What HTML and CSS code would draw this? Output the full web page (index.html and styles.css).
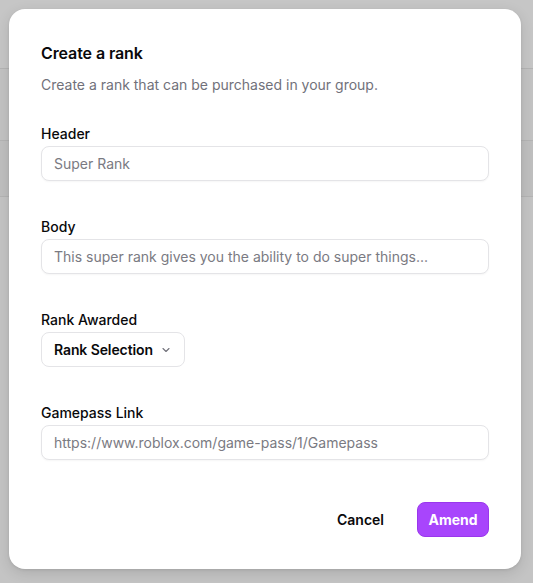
FILE: index.html
```html
<!DOCTYPE html>
<html lang="en">
<head>
<meta charset="utf-8">
<title>Create a rank</title>
<link rel="stylesheet" href="styles.css">
</head>
<body>
<div class="backdrop">
  <div class="bg-row bg-row-1"></div>
  <div class="bg-row bg-row-2"></div>
  <div class="bg-row bg-row-3"></div>
  <div class="bg-row bg-row-4"></div>
</div>
<div class="dialog" role="dialog" aria-labelledby="dlg-title">
  <h2 id="dlg-title" class="dialog-title">Create a rank</h2>
  <p class="dialog-desc">Create a rank that can be purchased in your group.</p>

  <div class="field field-first">
    <label class="field-label">Header</label>
    <input class="text-input" type="text" placeholder="Super Rank">
  </div>

  <div class="field">
    <label class="field-label">Body</label>
    <input class="text-input" type="text" placeholder="This super rank gives you the ability to do super things...">
  </div>

  <div class="field">
    <label class="field-label">Rank Awarded</label>
    <button class="select-btn" type="button">
      <span class="select-text">Rank Selection</span>
      <svg class="chevron" width="12" height="12" viewBox="0 0 24 24" fill="none" stroke="currentColor" stroke-width="2.2" stroke-linecap="round" stroke-linejoin="round"><path d="m6 9 6 6 6-6"/></svg>
    </button>
  </div>

  <div class="field">
    <label class="field-label">Gamepass Link</label>
    <input class="text-input" type="text" placeholder="https://www.roblox.com/game-pass/1/Gamepass">
  </div>

  <div class="dialog-footer">
    <button class="btn btn-ghost" type="button">Cancel</button>
    <button class="btn btn-primary" type="button">Amend</button>
  </div>
</div>
</body>
</html>
```

FILE: styles.css
```css
* { box-sizing: border-box; }

html, body {
  margin: 0;
  padding: 0;
  height: 100%;
}

body {
  background: #c5c5c5;
  font-family: Inter, "Liberation Sans", sans-serif;
  color: #09090b;
  overflow: hidden;
}

.backdrop {
  display: flex;
  flex-direction: column;
}

.bg-row-1 { height: 68px; background: #c6c6c6; }
.bg-row-2 { height: 72px; background: #c3c3c3; border-top: 1px solid #b4b4b4; }
.bg-row-3 { height: 56px; background: #bfbfbf; border-top: 1px solid #b4b4b4; }
.bg-row-4 { height: 400px; background: #c4c4c4; border-top: 1px solid #b4b4b4; }

.dialog {
  position: absolute;
  left: 9px;
  top: 9px;
  width: 512px;
  height: 560px;
  background: #ffffff;
  border-radius: 16px;
  padding: 32px;
  box-shadow: 0 4px 14px rgba(0, 0, 0, 0.12), 0 1px 3px rgba(0, 0, 0, 0.08);
  display: flex;
  flex-direction: column;
}

.dialog-title {
  margin: 0;
  font-size: 16px;
  line-height: 24px;
  font-weight: 600;
  letter-spacing: -0.1px;
}

.dialog-desc {
  margin: 10px 0 0;
  font-size: 14px;
  line-height: 20px;
  color: #71717a;
}

.field {
  display: flex;
  flex-direction: column;
  align-items: flex-start;
  margin-top: 36px;
}

.field-first { margin-top: 29px; }

.field-label {
  font-size: 14px;
  line-height: 20px;
  font-weight: 500;
  color: #09090b;
}

.text-input {
  margin-top: 2px;
  width: 100%;
  height: 35px;
  border: 1px solid #e4e4e7;
  border-radius: 8px;
  padding: 0 12px;
  font-family: inherit;
  font-size: 14px;
  color: #09090b;
  background: #fff;
  box-shadow: 0 1px 2px rgba(0, 0, 0, 0.04);
  outline: none;
}

.text-input::placeholder { color: #7a7a82; }

.select-btn {
  margin-top: 2px;
  height: 35px;
  display: flex;
  align-items: center;
  gap: 7px;
  padding: 0 12px;
  border: 1px solid #e4e4e7;
  border-radius: 8px;
  background: #fff;
  font-family: inherit;
  font-size: 14px;
  font-weight: 600;
  letter-spacing: -0.1px;
  color: #09090b;
  white-space: nowrap;
  cursor: pointer;
}

.chevron { color: #71717a; flex: none; }

.dialog-footer {
  margin-top: auto;
  display: flex;
  justify-content: flex-end;
  align-items: center;
  gap: 17px;
}

.btn {
  height: 35px;
  border-radius: 8px;
  padding: 0 16px;
  font-family: inherit;
  font-size: 14px;
  cursor: pointer;
}

.btn-ghost {
  border: none;
  background: transparent;
  font-weight: 600;
  color: #09090b;
}

.btn-primary {
  width: 72px;
  padding: 0;
  border: 1px solid #9a37ec;
  background: #a845fc;
  color: #ffffff;
  font-weight: 700;
}
```
